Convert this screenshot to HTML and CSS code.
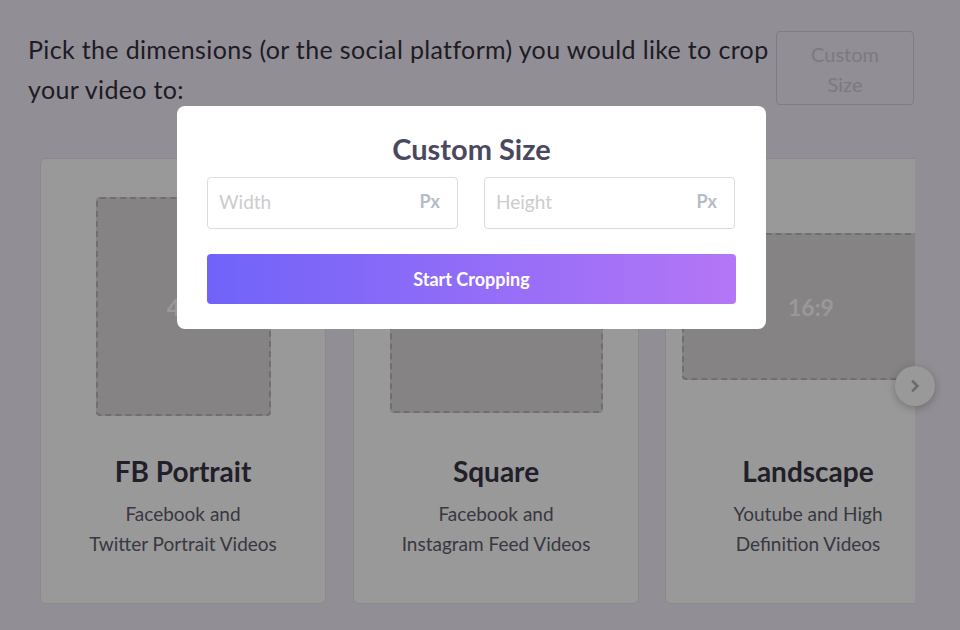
FILE: index.html
```html
<!DOCTYPE html>
<html>
<head>
<meta charset="utf-8">
<link rel="stylesheet" href="styles.css">
</head>
<body>
<div class="page">
  <div class="header">
    <p class="intro">Pick the dimensions (or the social platform) you would like to crop your video to:</p>
    <button class="custom-btn">Custom Size</button>
  </div>
  <div class="slider">
    <div class="track">
      <div class="card">
        <div class="preview"><div class="shape portrait">4:5</div></div>
        <h3 class="card-title">FB Portrait</h3>
        <p class="card-sub">Facebook and<br>Twitter Portrait Videos</p>
      </div>
      <div class="card">
        <div class="preview"><div class="shape square">1:1</div></div>
        <h3 class="card-title">Square</h3>
        <p class="card-sub">Facebook and<br>Instagram Feed Videos</p>
      </div>
      <div class="card">
        <div class="preview preview-left"><div class="shape landscape">16:9</div></div>
        <h3 class="card-title">Landscape</h3>
        <p class="card-sub">Youtube and High<br>Definition Videos</p>
      </div>
    </div>
    <button class="next-btn" aria-label="Next">
      <svg width="14" height="14" viewBox="0 0 14 14"><polyline points="5,2.5 9.5,7 5,11.5" fill="none" stroke="#b3b2bd" stroke-width="2.6" stroke-linecap="square"/></svg>
    </button>
  </div>
</div>
<div class="overlay"></div>
<div class="modal">
  <h2 class="modal-title">Custom Size</h2>
  <div class="inputs">
    <label class="field"><input type="text" placeholder="Width"><span class="unit">Px</span></label>
    <label class="field"><input type="text" placeholder="Height"><span class="unit">Px</span></label>
  </div>
  <button class="start-btn">Start Cropping</button>
</div>
</body>
</html>
```
FILE: styles.css
```css
* { box-sizing: border-box; }
html, body { margin: 0; height: 100%; }
body {
  background: #f2edf8;
  font-family: Lato, "Noto Sans", sans-serif;
  overflow: hidden;
}
.page { padding: 29px 0 0 28px; }
.header {
  display: flex;
  align-items: flex-start;
  gap: 6px;
}
.intro {
  margin: 0;
  width: 742px;
  font-size: 25px;
  letter-spacing: 0.35px;
  line-height: 40px;
  color: #352f3c;
}
.custom-btn {
  margin-top: 2px;
  width: 138px;
  height: 74px;
  padding: 7px 20px;
  background: transparent;
  border: 1px solid #d4cfdc;
  border-radius: 4px;
  font-family: inherit;
  font-size: 20px;
  line-height: 30px;
  color: #cfcbd5;
}
.slider {
  position: relative;
  margin-top: 49px;
  margin-left: 12px;
  width: 875px;
}
.track {
  display: flex;
  gap: 26px;
  overflow: hidden;
}
.card {
  flex: 0 0 286px;
  height: 446px;
  background: #fff;
  border: 1px solid #e6e6e6;
  border-radius: 6px;
  text-align: center;
  padding-top: 18px;
}
.card:first-child { margin-right: 1px; }
.preview {
  height: 259px;
  display: flex;
  align-items: center;
  justify-content: center;
}
.preview-left {
  justify-content: flex-start;
  padding-left: 16px;
}
.shape {
  display: flex;
  align-items: center;
  justify-content: center;
  background: #dedada;
  border: 2px dashed #bab8bc;
  border-radius: 4px;
  color: #fff;
  font-weight: 700;
  font-size: 23px;
}
.portrait { width: 175px; height: 219px; }
.square { width: 213px; height: 213px; }
.landscape { width: 258px; height: 147px; flex: 0 0 258px; }
.card-title {
  margin: 17px 0 0;
  font-size: 28px;
  line-height: 36px;
  font-weight: 700;
  color: #393546;
}
.card-sub {
  margin: 10px 0 0;
  font-size: 19px;
  line-height: 30px;
  color: #615d6e;
}
.next-btn {
  position: absolute;
  right: -20px;
  top: 208px;
  width: 40px;
  height: 40px;
  border-radius: 50%;
  border: none;
  background: #fff;
  box-shadow: 0 2px 8px rgba(0,0,0,0.25);
  display: flex;
  align-items: center;
  justify-content: center;
  padding: 0;
}
.overlay {
  position: fixed;
  inset: 0;
  background: rgba(0,0,0,0.4);
}
.modal {
  position: fixed;
  left: 177px;
  top: 106px;
  width: 589px;
  height: 223px;
  background: #fff;
  border-radius: 8px;
  padding: 24px 30px 25px;
}
.modal-title {
  margin: 0 0 9px;
  text-align: center;
  font-size: 29px;
  line-height: 38px;
  font-weight: 700;
  color: #4a4860;
}
.inputs {
  display: flex;
  gap: 26px;
}
.field {
  flex: 0 0 251px;
  min-width: 0;
  height: 52px;
  border: 1px solid #dcdcdc;
  border-radius: 4px;
  display: flex;
  align-items: center;
  padding: 0 17px 3px 11px;
}
.field input {
  flex: 1;
  width: 0;
  min-width: 0;
  border: none;
  outline: none;
  padding: 0;
  font-family: inherit;
  font-size: 19px;
  color: #333;
  background: transparent;
}
.field input::placeholder { color: #cccccc; }
.unit {
  font-weight: 700;
  font-size: 18px;
  color: #b6bcc6;
  margin-bottom: 2px;
}
.start-btn {
  margin-top: 25px;
  width: 100%;
  height: 50px;
  border: none;
  border-radius: 4px;
  background: linear-gradient(90deg, #7063f9 0%, #b476f6 100%);
  color: #fff;
  font-family: inherit;
  font-weight: 700;
  font-size: 18px;
}
```
